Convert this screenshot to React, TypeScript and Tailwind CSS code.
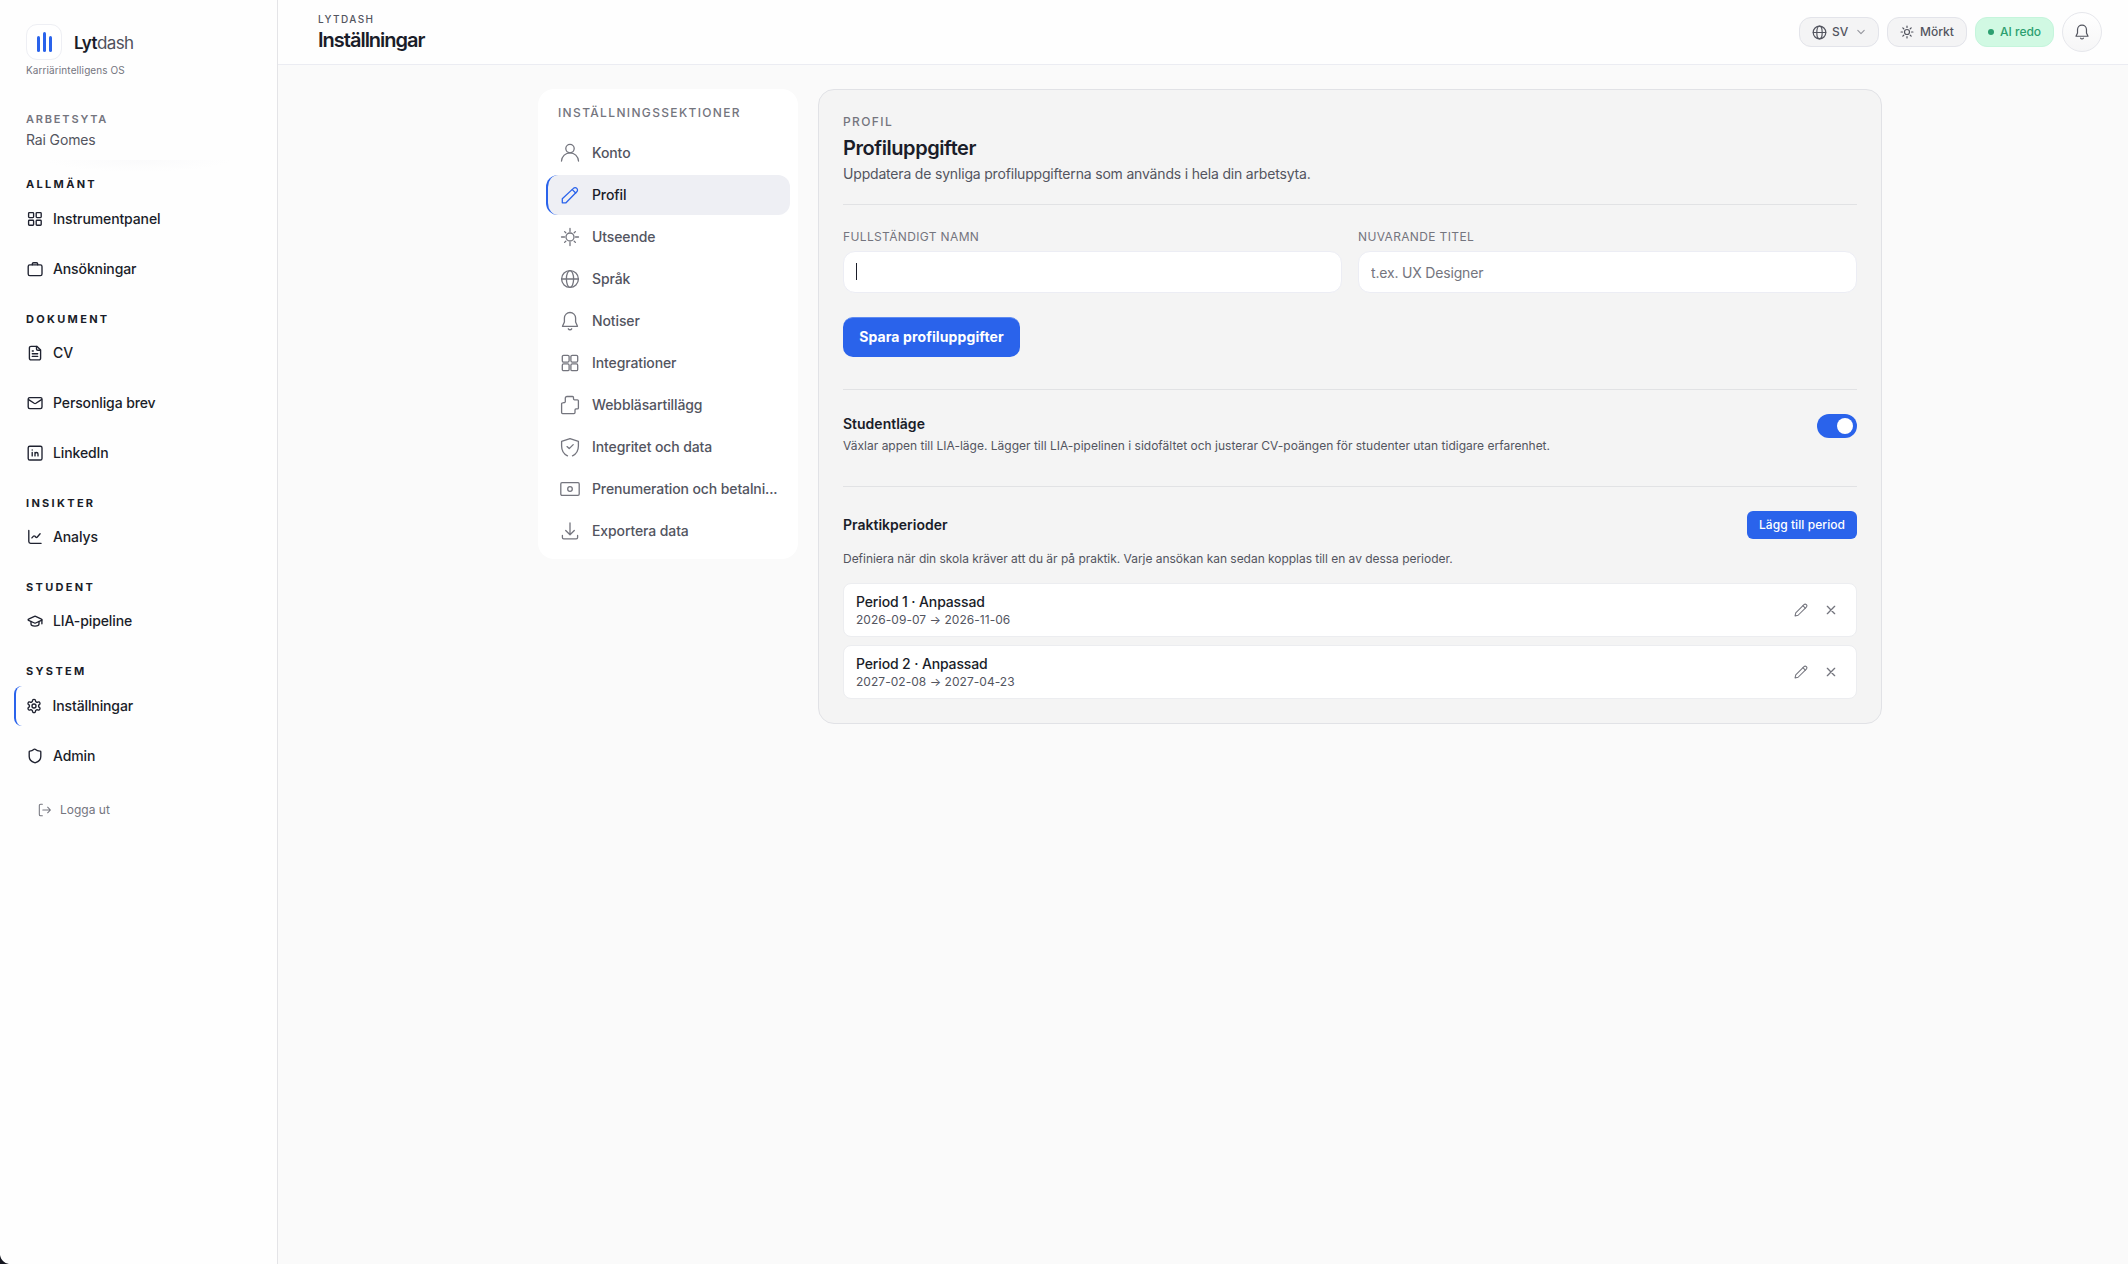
import { useState } from "react";
import type { ReactNode } from "react";

interface IconProps {
  size?: number;
  box?: number;
  stroke?: number;
  className?: string;
  children: ReactNode;
}

function Icon({ size = 16, box = 16, stroke = 1.35, className = "", children }: IconProps) {
  return (
    <svg
      width={size}
      height={size}
      viewBox={`0 0 ${box} ${box}`}
      fill="none"
      stroke="currentColor"
      strokeWidth={stroke}
      strokeLinecap="round"
      strokeLinejoin="round"
      className={`shrink-0 ${className}`}
    >
      {children}
    </svg>
  );
}

// Sidebar icons, 16px grid
const navIcons: Record<string, ReactNode> = {
  dashboard: (
    <>
      <rect x="1.6" y="1.6" width="5" height="5" rx="0.8" />
      <rect x="9.2" y="1.6" width="5" height="5" rx="0.8" />
      <rect x="1.6" y="9.2" width="5" height="5" rx="0.8" />
      <rect x="9.2" y="9.2" width="5" height="5" rx="0.8" />
    </>
  ),
  briefcase: (
    <>
      <rect x="1.2" y="3.8" width="13.8" height="10.8" rx="1.6" />
      <path d="M5.3 3.8V3a1.3 1.3 0 0 1 1.3-1.3h2.8A1.3 1.3 0 0 1 10.7 3v.8" />
    </>
  ),
  file: (
    <>
      <path d="M9.8 1.3H4A1.6 1.6 0 0 0 2.4 2.9v10.4A1.6 1.6 0 0 0 4 14.9h8a1.6 1.6 0 0 0 1.6-1.6V5.1z" />
      <path d="M9.5 1.5v2.4a1.3 1.3 0 0 0 1.3 1.3h2.5M5.3 6h1M5.3 8.7h5.4M5.3 11.4h5.4" />
    </>
  ),
  mail: (
    <>
      <rect x="1.2" y="2.6" width="13.8" height="11" rx="1.5" />
      <path d="m1.6 4.6 5.6 3.7a1.6 1.6 0 0 0 1.7 0l5.6-3.7" />
    </>
  ),
  linkedin: (
    <>
      <rect x="1.2" y="1.2" width="13.8" height="13.8" rx="1.6" />
      <path d="M5.2 7.3v3.6M5.2 5v.1M8 10.9V7.3M8 9a1.5 1.5 0 0 1 3 0v1.9" />
    </>
  ),
  chart: (
    <>
      <path d="M1.8 1.5v11a1.8 1.8 0 0 0 1.8 1.8h10.5" />
      <path d="m4.9 8.9 1.6-1.8a.8.8 0 0 1 1.2 0l1.2 1.2a.8.8 0 0 0 1.2 0l3-3.5" />
    </>
  ),
  graduation: (
    <>
      <path d="M14.5 7.3a.6.6 0 0 0 0-1.1L8.6 3.4a1.3 1.3 0 0 0-1.1 0L1.5 6.2a.6.6 0 0 0 0 1.1l6 2.7a1.3 1.3 0 0 0 1.1 0z" />
      <path d="M14.9 6.8v4M4 8.5v2.6c0 1.1 1.8 2 4 2s4-.9 4-2V8.5" />
    </>
  ),
  gear: (
    <>
      <path d="M8.15 1.33h-.3a1.33 1.33 0 0 0-1.33 1.34v.12a1.33 1.33 0 0 1-.67 1.15l-.28.17a1.33 1.33 0 0 1-1.34 0l-.1-.05a1.33 1.33 0 0 0-1.82.48l-.14.25a1.33 1.33 0 0 0 .48 1.82l.1.07a1.33 1.33 0 0 1 .67 1.15v.34a1.33 1.33 0 0 1-.67 1.16l-.1.06a1.33 1.33 0 0 0-.48 1.82l.14.25a1.33 1.33 0 0 0 1.82.48l.1-.05a1.33 1.33 0 0 1 1.34 0l.28.17a1.33 1.33 0 0 1 .67 1.15v.12a1.33 1.33 0 0 0 1.33 1.34h.3a1.33 1.33 0 0 0 1.33-1.34v-.12a1.33 1.33 0 0 1 .67-1.15l.28-.17a1.33 1.33 0 0 1 1.34 0l.1.05a1.33 1.33 0 0 0 1.82-.48l.14-.25a1.33 1.33 0 0 0-.48-1.82l-.1-.06a1.33 1.33 0 0 1-.67-1.16v-.34a1.33 1.33 0 0 1 .67-1.15l.1-.07a1.33 1.33 0 0 0 .48-1.82l-.14-.25a1.33 1.33 0 0 0-1.82-.48l-.1.05a1.33 1.33 0 0 1-1.34 0l-.28-.17a1.33 1.33 0 0 1-.67-1.15v-.12a1.33 1.33 0 0 0-1.33-1.34z" />
      <circle cx="8" cy="8" r="2" />
    </>
  ),
  shield: (
    <path d="M13.8 8.5c0 3.5-2.4 5.2-5.3 6.2-.3.1-.6.1-.9 0-3-1-5.4-2.7-5.4-6.2V3.8c0-.4.3-.7.7-.7 1.3 0 3-.8 4.2-1.8a.8.8 0 0 1 1 0c1.2 1 2.9 1.8 4.9 1.8.5 0 .8.3.8.7z" />
  ),
};

// Settings icons, 20px grid
const settingsIcons: Record<string, ReactNode> = {
  user: (
    <>
      <circle cx="10" cy="5.6" r="4.2" />
      <path d="M1.5 18C1.9 13.3 5.5 9.8 10 9.8s8.1 3.5 8.500 8.200" />
    </>
  ),
  pencil: (
    <>
      <path d="M2.3 17.8v-4L13.4 3.4a2.4 2.4 0 0 1 3.4 0 2.4 2.4 0 0 1 0 3.4L6 17.8z" />
      <path d="m12.3 4.6 3.4 3.4" />
    </>
  ),
  sun: (
    <>
      <circle cx="10" cy="10" r="4" />
      <path d="M10 1.5v3M10 15.5v3M1.5 10h3M15.5 10h3M4.6 4.6l1.2 1.2M14.2 14.2l1.2 1.2M15.4 4.6l-1.2 1.2M5.8 14.2l-1.2 1.2" />
    </>
  ),
  globe: (
    <>
      <circle cx="10" cy="10" r="8.4" />
      <path d="M1.6 10h16.8" />
      <ellipse cx="10" cy="10" rx="3.6" ry="8.4" />
    </>
  ),
  bell: (
    <>
      <path d="M10 1.5a5.6 5.6 0 0 0-5.6 5.6v4L2.5 15.3h15l-1.9-4.2v-4A5.6 5.6 0 0 0 10 1.5z" />
      <path d="M8.3 17.8a2 2 0 0 0 3.4 0" />
    </>
  ),
  grid: (
    <>
      <rect x="2.3" y="2.3" width="6.8" height="6.8" rx="1.3" />
      <rect x="10.9" y="2.3" width="6.8" height="6.8" rx="1.3" />
      <rect x="2.3" y="10.9" width="6.8" height="6.8" rx="1.3" />
      <rect x="10.9" y="10.9" width="6.8" height="6.8" rx="1.3" />
    </>
  ),
  puzzle: (
    <path d="M7 1.5h5.500a1 1 0 0 1 1 1v1.300a1 1 0 0 0 1 1h2.900a1 1 0 0 1 1 1v7.100a1 1 0 0 1-1 1h-1.400a1 1 0 0 0-1 1v2.700a1 1 0 0 1-1 1H2.600a1 1 0 0 1-1-1V8.800a1 1 0 0 1 1-1l1.400-.1a1.300 1.300 0 0 0 1.300-1.300V3.200A1.700 1.700 0 0 1 7 1.500z" />
  ),
  shieldCheck: (
    <>
      <path d="m7 9.6 2.2 2 4-4" />
      <path d="M7.5 18.8C3.7 17 1.6 13.2 1.6 9V4.3L10 1.6l8.4 2.7V9c0 4.2-2.1 8-5.9 9.8" />
    </>
  ),
  banknote: (
    <>
      <rect x="0.8" y="3.7" width="18.4" height="12.6" rx="1.2" />
      <circle cx="10" cy="10" r="2.3" />
    </>
  ),
  download: (
    <>
      <path d="M10 2v11.5M5.7 9.500l4.300 4.200 4.300-4.200" />
      <path d="M2.4 14.5v2a1.3 1.3 0 0 0 1.3 1.3h12.6a1.3 1.3 0 0 0 1.3-1.3v-2" />
    </>
  ),
};

interface NavEntry {
  label: string;
  icon: string;
}

const navGroups: { title: string; items: NavEntry[] }[] = [
  {
    title: "ALLMÄNT",
    items: [
      { label: "Instrumentpanel", icon: "dashboard" },
      { label: "Ansökningar", icon: "briefcase" },
    ],
  },
  {
    title: "DOKUMENT",
    items: [
      { label: "CV", icon: "file" },
      { label: "Personliga brev", icon: "mail" },
      { label: "LinkedIn", icon: "linkedin" },
    ],
  },
  { title: "INSIKTER", items: [{ label: "Analys", icon: "chart" }] },
  { title: "STUDENT", items: [{ label: "LIA-pipeline", icon: "graduation" }] },
  {
    title: "SYSTEM",
    items: [
      { label: "Inställningar", icon: "gear" },
      { label: "Admin", icon: "shield" },
    ],
  },
];

const sections: NavEntry[] = [
  { label: "Konto", icon: "user" },
  { label: "Profil", icon: "pencil" },
  { label: "Utseende", icon: "sun" },
  { label: "Språk", icon: "globe" },
  { label: "Notiser", icon: "bell" },
  { label: "Integrationer", icon: "grid" },
  { label: "Webbläsartillägg", icon: "puzzle" },
  { label: "Integritet och data", icon: "shieldCheck" },
  { label: "Prenumeration och betalni...", icon: "banknote" },
  { label: "Exportera data", icon: "download" },
];

const periods = [
  { name: "Period 1 · Anpassad", from: "2026-09-07", to: "2026-11-06" },
  { name: "Period 2 · Anpassad", from: "2027-02-08", to: "2027-04-23" },
];

function Sidebar() {
  return (
    <aside className="relative flex w-[278px] shrink-0 flex-col border-r border-[#e4e4e7] bg-[#fefefe] pt-6">
      <div className="flex h-9 items-center gap-3 pl-[26px]">
        <div className="flex size-9 items-center justify-center gap-[3px] rounded-[11px] border border-[#eeeff4] bg-white">
          <span className="mt-1 h-4 w-[3px] rounded-full bg-[#2a63eb]" />
          <span className="h-5 w-[3px] rounded-full bg-[#2a63eb]" />
          <span className="mt-1 h-4 w-[3px] rounded-full bg-[#2a63eb]" />
        </div>
        <div className="pt-0.5 text-[17px] leading-6 font-semibold tracking-[-0.035em] text-[#1a1d29]">
          Lyt<span className="font-normal text-[#4f515c]">dash</span>
        </div>
      </div>
      <p className="mt-0.5 pl-[26px] text-[10px] leading-4 tracking-[0.01em] text-[#74757e]">Karriärintelligens OS</p>

      <p className="mt-[33px] pl-[26px] text-[11px] leading-4 font-semibold tracking-[0.165em] text-[#74757e]">ARBETSYTA</p>
      <p className="mt-[3px] pl-[26px] text-sm leading-5 tracking-[-0.01em] text-[#53555f]">Rai Gomes</p>
      <div className="mx-[45px] mt-[10px] h-3 bg-[radial-gradient(ellipse_at_top,#fafafb,transparent_70%)]" />

      <nav className="mt-1 flex flex-col gap-[22px]">
        {navGroups.map((group, i) => (
          <div key={group.title}>
            <h3 className="pl-[26px] text-[11px] leading-4 font-bold tracking-[0.21em] text-[#1a1d29]">{group.title}</h3>
            <ul className={i === 0 || i === 4 ? "mt-[7px] flex flex-col gap-2.5" : "mt-1.5 flex flex-col gap-2.5"}>
              {group.items.map((item) => (
                <li
                  key={item.label}
                  className={
                    item.icon === "gear"
                      ? "ml-[14px] flex h-10 items-center gap-[10.5px] rounded-lg border-l-2 border-[#2a63eb] pl-[10px]"
                      : "ml-[14px] flex h-10 items-center gap-[10px] pl-[13px]"
                  }
                >
                  <Icon className="text-[#1f2230]">{navIcons[item.icon]}</Icon>
                  <span className="text-sm font-medium tracking-[-0.008em] text-[#1a1d29]">{item.label}</span>
                </li>
              ))}
            </ul>
          </div>
        ))}
      </nav>

      <button className="mt-[18px] flex h-8 items-center gap-2 pl-[38px] text-xs text-[#74757e]">
        <Icon size={14} stroke={1.2}>
          <path d="M5 1.5H3A1.5 1.5 0 0 0 1.500 3v10A1.500 1.500 0 0 0 3 14.500h2M5.500 8h8.700M11 4.800 14.200 8 11 11.200" />
        </Icon>
        Logga ut
      </button>

      {/* rounded window corner */}
      <svg className="absolute bottom-0 left-0" width="9" height="9" viewBox="0 0 9 9">
        <path d="M0 0C1 5 4 8 9 9H0z" fill="#14161f" />
      </svg>
    </aside>
  );
}

function Header() {
  return (
    <header className="flex h-[65px] items-center justify-between border-b border-[#ebecf2] bg-[#fefefe] pr-[26px] pl-10">
      <div className="flex flex-col pt-[3px]">
        <span className="text-[10px] leading-3 font-medium tracking-[0.14em] text-[#53555f]">LYTDASH</span>
        <h1 className="mt-px text-xl leading-7 font-semibold tracking-[-0.05em] text-[#1a1d29]">Inställningar</h1>
      </div>
      <div className="flex items-center gap-2 text-[13px] font-medium text-[#53555f]">
        <button className="flex h-[30px] w-20 items-center rounded-xl border border-[#e3e4ea] bg-[#f4f4f5] pl-3">
          <Icon size={15} box={20} stroke={1.6}>
            {settingsIcons.globe}
          </Icon>
          <span className="ml-[5px] text-xs">SV</span>
          <Icon size={10} box={10} stroke={1.1} className="ml-2 text-[#94959d]">
            <path d="m1.8 3.4 3.2 3.200 3.200-3.200" />
          </Icon>
        </button>
        <button className="flex h-[30px] w-20 items-center rounded-xl border border-[#e3e4ea] bg-[#f4f4f5] pl-3">
          <Icon size={14} box={20} stroke={1.7}>
            <circle cx="10" cy="10" r="3.6" />
            <path d="M10 1.5v2M10 16.5v2M1.5 10h2M16.5 10h2M4 4l1.4 1.4M14.6 14.6 16 16M16 4l-1.4 1.4M5.4 14.6 4 16" />
          </Icon>
          <span className="ml-1.5 text-xs">Mörkt</span>
        </button>
        <span className="flex h-[30px] w-[79px] items-center rounded-xl border border-[#c5f5dc] bg-[#d1f9e3] pl-3 text-xs text-[#2c9f70]">
          <span className="mr-1.5 size-1.5 rounded-full bg-[#2c9f70]" />
          AI redo
        </span>
        <button className="flex size-10 items-center justify-center rounded-full border border-[#e6e7ec] bg-linear-to-b from-white to-[#f6f6f7]">
          <Icon size={16} box={20} stroke={1.5}>
            {settingsIcons.bell}
          </Icon>
        </button>
      </div>
    </header>
  );
}

function SettingsNav() {
  return (
    <div className="h-[470px] w-[260px] shrink-0 rounded-2xl bg-white px-2 pt-4">
      <h2 className="pl-3 text-xs leading-4 font-medium tracking-[0.112em] text-[#74757e]">INSTÄLLNINGSSEKTIONER</h2>
      <ul className="mt-3 flex flex-col gap-0.5">
        {sections.map((s) => {
          const active = s.icon === "pencil";
          return (
            <li
              key={s.label}
              className={
                active
                  ? "flex h-10 items-center gap-3 rounded-xl border-l-2 border-[#2a63eb] bg-[#eeeff4] pr-2 pl-3"
                  : "flex h-10 items-center gap-3 pr-2 pl-[14px]"
              }
            >
              <Icon size={20} box={20} stroke={1.3} className={active ? "text-[#2a63eb]" : "text-[#74757e]"}>
                {settingsIcons[s.icon]}
              </Icon>
              <span
                className={
                  active
                    ? "text-sm font-medium tracking-[-0.008em] whitespace-nowrap text-[#1a1d29]"
                    : "text-sm font-medium tracking-[-0.008em] whitespace-nowrap text-[#53555f]"
                }
              >
                {s.label}
              </span>
            </li>
          );
        })}
      </ul>
    </div>
  );
}

function PeriodRow({ name, from, to }: { name: string; from: string; to: string }) {
  return (
    <div className="flex h-[54px] items-center justify-between rounded-lg border border-[#ecedf0] bg-white pr-[18px] pl-3">
      <div>
        <p className="text-sm leading-[18px] font-medium tracking-[-0.01em] text-[#1a1d29]">{name}</p>
        <p className="text-xs leading-[17px] tracking-[0.003em] text-[#53555f]">
          {from} → {to}
        </p>
      </div>
      <div className="flex items-center gap-4 text-[#74757e]">
        <Icon size={14} stroke={1.2}>
          <path d="M1.2 14.8 2 11.3 11.4 1.9a1.9 1.9 0 0 1 2.7 2.7L4.7 14z" />
          <path d="m10.2 3.1 2.7 2.7" />
        </Icon>
        <Icon size={14} stroke={1.5}>
          <path d="m3.8 3.8 8.4 8.4M12.2 3.8l-8.4 8.4" />
        </Icon>
      </div>
    </div>
  );
}

function ProfileCard() {
  const [fullName, setFullName] = useState("");
  const [title, setTitle] = useState("");

  return (
    <section className="h-[635px] flex-1 rounded-2xl border border-[#e1e2e6] bg-[#f4f4f4] px-6 pt-6">
      <p className="text-xs leading-4 font-medium tracking-[0.115em] text-[#74757e]">PROFIL</p>
      <h2 className="mt-1 text-xl leading-7 font-semibold tracking-[-0.022em] text-[#1a1d29]">Profiluppgifter</h2>
      <p className="mt-0.5 text-sm leading-5 tracking-[-0.013em] text-[#53555f]">
        Uppdatera de synliga profiluppgifterna som används i hela din arbetsyta.
      </p>

      <div className="mt-5 grid grid-cols-2 gap-4 border-t border-[#e1e2e4] pt-6">
        <label className="flex flex-col gap-1.5">
          <span className="text-xs leading-4 tracking-[0.03em] text-[#74757e]">FULLSTÄNDIGT NAMN</span>
          <span className="relative flex">
            <input
              value={fullName}
              onChange={(e) => setFullName(e.target.value)}
              className="h-[42px] w-full rounded-xl border border-[#ecedf4] bg-white px-3 text-sm outline-none"
            />
            <span className="absolute top-3 left-[13px] h-[17px] w-px bg-[#1a1d29]" />
          </span>
        </label>
        <label className="flex flex-col gap-1.5">
          <span className="text-xs leading-4 tracking-[0.03em] text-[#74757e]">NUVARANDE TITEL</span>
          <input
            value={title}
            onChange={(e) => setTitle(e.target.value)}
            placeholder="t.ex. UX Designer"
            className="h-[42px] w-full rounded-xl border border-[#ecedf4] bg-white px-3 text-sm tracking-[-0.013em] outline-none placeholder:text-[#74757e]"
          />
        </label>
      </div>
      <button className="mt-6 h-10 w-[177px] rounded-[10px] border-t border-[#5f8bf1] bg-[#2a63eb] pb-0.5 text-sm font-bold tracking-[0.008em] text-white">
        Spara profiluppgifter
      </button>

      <div className="mt-8 flex h-[97px] justify-between border-t border-[#e1e2e4] pt-6">
        <div>
          <h3 className="text-sm leading-5 font-semibold text-[#1a1d29]">Studentläge</h3>
          <p className="mt-[3px] text-xs leading-[18px] text-[#53555f]">
            Växlar appen till LIA-läge. Lägger till LIA-pipelinen i sidofältet och justerar CV-poängen för studenter utan tidigare erfarenhet.
          </p>
        </div>
        <button className="flex h-6 w-10 items-center justify-end rounded-full bg-[#2a63eb] px-1">
          <span className="size-4 rounded-full bg-white" />
        </button>
      </div>

      <div className="border-t border-[#e1e2e4] pt-6">
        <div className="flex items-center justify-between">
          <h3 className="text-sm leading-5 font-semibold text-[#1a1d29]">Praktikperioder</h3>
          <button className="h-7 w-[110px] rounded-md bg-[#2a63eb] text-xs font-medium tracking-[0.006em] text-white">Lägg till period</button>
        </div>
        <p className="mt-3 text-xs leading-4 tracking-[-0.0025em] text-[#53555f]">
          Definiera när din skola kräver att du är på praktik. Varje ansökan kan sedan kopplas till en av dessa perioder.
        </p>
        <div className="mt-4 flex flex-col gap-2">
          {periods.map((p) => (
            <PeriodRow key={p.name} {...p} />
          ))}
        </div>
      </div>
    </section>
  );
}

export default function App() {
  return (
    <div className="flex h-[1264px] w-[2128px] overflow-hidden bg-[#fafafa] font-['Inter',sans-serif]">
      <Sidebar />
      <div className="flex min-w-0 flex-1 flex-col">
        <Header />
        <main className="flex items-start pt-6 pr-[26px] pl-10">
          <div className="mx-auto flex w-[1344px] items-start gap-5">
            <SettingsNav />
            <ProfileCard />
          </div>
        </main>
      </div>
    </div>
  );
}
